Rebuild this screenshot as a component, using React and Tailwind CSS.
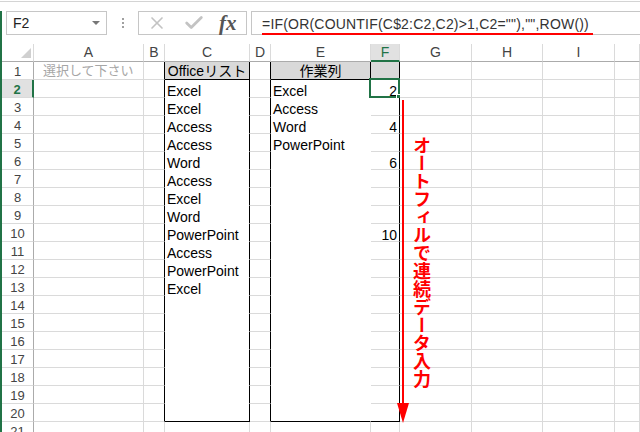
import React from "react";
import { X, Check } from "lucide-react";

// Excel sheet with a helper column that numbers the first occurrence of each value
const COLS = ["A", "B", "C", "D", "E", "F", "G", "H", "I", "J"];
const ROWS = Array.from({ length: 21 }, (_, i) => i + 1);

const listC = {
  2: "Excel", 3: "Excel", 4: "Access", 5: "Access", 6: "Word", 7: "Access",
  8: "Excel", 9: "Word", 10: "PowerPoint", 11: "Access", 12: "PowerPoint", 13: "Excel",
};
const listE = { 2: "Excel", 3: "Access", 4: "Word", 5: "PowerPoint" };
const listF = { 2: 2, 4: 4, 6: 6, 10: 10 };

const FORMULA = '=IF(OR(COUNTIF(C$2:C2,C2)>1,C2=""),"",ROW())';

// gridline / table border colour of each cell
function borders(col, row) {
  let r = "border-r-[#dadada]";
  let b = "border-b-[#dadada]";
  if (row <= 20) {
    if (["B", "C", "D", "F"].includes(col)) r = "border-r-black";
    if (col === "E") r = row === 1 ? "border-r-black" : "border-r-white";
    if (["C", "E", "F"].includes(col)) {
      if (row === 1 || row === 20) b = "border-b-black";
      else if (col !== "F") b = "border-b-white";
    }
  }
  return `${r} ${b}`;
}

function cellContent(col, row) {
  if (row === 1) {
    if (col === "A")
      return <span className="pl-[9px] text-[13px] text-[#a6a6a6] leading-[16px] self-center">選択して下さい</span>;
    if (col === "C") return <span className="w-full text-center leading-[15px]">Officeリスト</span>;
    if (col === "E") return <span className="w-full text-center leading-[15px]">作業列</span>;
    return null;
  }
  if (col === "C" && listC[row]) return <span className="pl-[2px] leading-[12px]">{listC[row]}</span>;
  if (col === "E" && listE[row]) return <span className="pl-[2px] leading-[12px]">{listE[row]}</span>;
  if (col === "F" && listF[row]) return <span className="w-full text-right pr-[2px] leading-[12px]">{listF[row]}</span>;
  return null;
}

function Cell({ col, row }) {
  const gray = row === 1 && ["C", "E", "F"].includes(col);
  const selected = col === "F" && row === 2;
  return (
    <div
      className={`relative flex items-end border-r border-b text-[14px] text-black ${borders(col, row)} ${
        gray ? "bg-[#d9d9d9]" : "bg-white"
      }`}
    >
      {cellContent(col, row)}
      {selected && (
        <div className="absolute -left-[2px] -top-[2px] w-[31px] h-[20px] border-2 border-[#217346]">
          <div className="absolute -right-[4px] -bottom-[4px] w-[6px] h-[6px] bg-[#217346] border border-white" />
        </div>
      )}
    </div>
  );
}

function FormulaBar() {
  return (
    <div className="flex h-[24px] pl-[4px] mt-px">
      <div className="w-[101px] border border-[#c6c6c6] flex items-center justify-between pl-[6px] pr-[6px]">
        <span className="text-[14px] text-[#222]">F2</span>
        <span className="w-0 h-0 border-l-[4px] border-r-[4px] border-t-[4px] border-l-transparent border-r-transparent border-t-[#777]" />
      </div>
      <div className="w-[31px] flex flex-col items-center justify-center gap-[2px]">
        <span className="w-[2px] h-[2px] bg-[#a0a0a0]" />
        <span className="w-[2px] h-[2px] bg-[#a0a0a0]" />
        <span className="w-[2px] h-[2px] bg-[#a0a0a0]" />
      </div>
      <div className="w-[109px] border border-[#c6c6c6] flex items-center">
        <X size={20} strokeWidth={2} className="ml-[8px] text-[#c3c3c3]" />
        <Check size={22} strokeWidth={3} className="ml-[16px] text-[#c3c3c3]" />
        <span className="ml-[14px] text-[21px] leading-none font-bold italic text-[#555] [font-family:'Liberation_Serif',serif]">
          fx
        </span>
      </div>
      <div className="flex-1 ml-[4px] border-l border-y border-[#c6c6c6] pl-[10px]">
        <span className="inline-block mt-[2px] pr-[4px] leading-[18px] text-[14px] tracking-[0.2px] text-[#333] border-b-2 border-[#ff0000]">
          {FORMULA}
        </span>
      </div>
    </div>
  );
}

export default function App() {
  return (
    <div className="relative w-[640px] h-[432px] overflow-hidden bg-white [font-family:'Liberation_Sans','Noto_Sans_CJK_JP',sans-serif]">
      <div className="h-[10px] pt-px">
        <div className="h-px bg-[#d4d4d4]" />
      </div>
      <div className="border-l-2 border-[#217346] h-[422px]">
        <FormulaBar />
        <div className="h-[9px]" />

        <div className="grid grid-cols-[32px_110px_21px_85px_21px_100px_29px_72px_71px_72px_1fr] auto-rows-[18px]">
          {/* corner */}
          <div className="flex items-end justify-end pr-[2px] pb-[3px] border-r border-b border-r-[#dadada] border-b-[#ababab]">
            <span className="w-0 h-0 border-l-[10px] border-l-transparent border-b-[10px] border-b-[#d0d0d0]" />
          </div>
          {COLS.map((c) =>
            c === "F" ? (
              <div key={c} className="flex items-center justify-center text-[14px] bg-[#e1e1e1] text-[#217346] border-r border-r-[#dadada] border-b-2 border-b-[#217346]">
                {c}
              </div>
            ) : (
              <div key={c} className="flex items-center justify-center text-[14px] text-[#444] border-r border-r-[#dadada] border-b border-b-[#ababab]">
                {c === "J" ? "" : c}
              </div>
            )
          )}

          {ROWS.map((r) => (
            <React.Fragment key={r}>
              {r === 2 ? (
                <div className="flex items-center justify-center pt-[2px] text-[13px] font-bold bg-[#e1e1e1] text-[#217346] border-r-2 border-r-[#217346] border-b border-b-[#dadada]">
                  {r}
                </div>
              ) : (
                <div className="flex items-center justify-center pt-[2px] text-[13px] text-[#444] border-r border-r-[#ababab] border-b border-b-[#dadada]">
                  {r}
                </div>
              )}
              {COLS.map((c) => (
                <Cell key={c} col={c} row={r} />
              ))}
            </React.Fragment>
          ))}
        </div>
      </div>

      {/* annotation: autofill arrow and note */}
      <svg className="absolute left-[396px] top-[100px]" width="14" height="324" viewBox="0 0 14 324">
        <line x1="7" y1="0" x2="7" y2="306" stroke="#ff0000" strokeWidth="2" />
        <polygon points="1,303 13,303 7,323" fill="#ff0000" />
      </svg>
      <div className="absolute left-[412px] top-[136px] text-[18px] leading-[19px] font-bold text-[#ff0000] [writing-mode:vertical-rl] [font-family:'Noto_Sans_CJK_JP',sans-serif]">
        オートフィルで連続データ入力
      </div>
    </div>
  );
}
